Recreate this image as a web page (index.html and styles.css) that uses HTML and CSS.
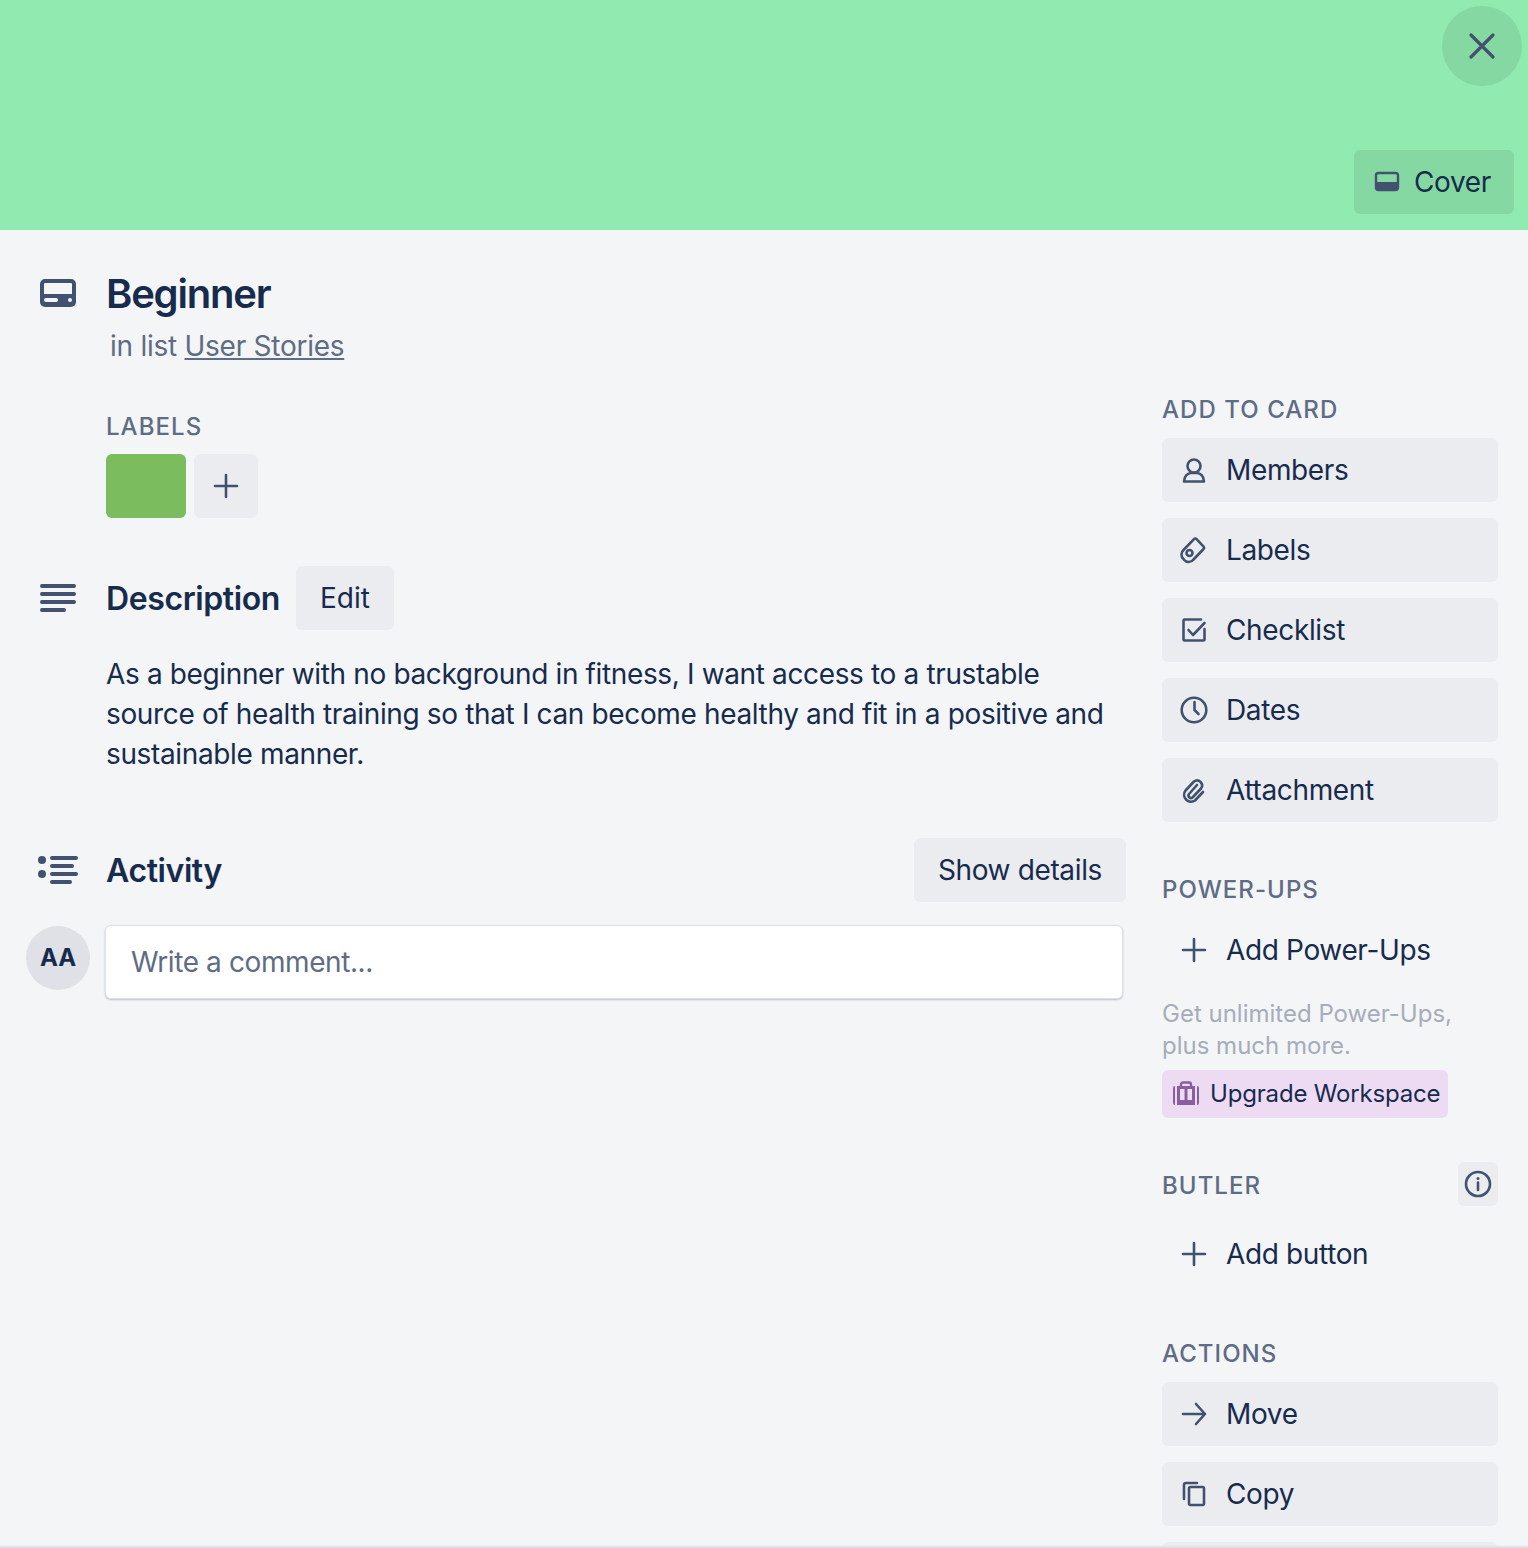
FILE: index.html
```html
<!DOCTYPE html>
<html>

<head>
    <link rel="stylesheet" href="styles.css">
</head>

<body>
    <div class="card">
        <div class="cover">
            <button class="close-btn">
                <svg width="32" height="32" viewBox="0 0 32 32"><path d="M5 5L27 27M27 5L5 27" class="ic bold"/></svg>
            </button>
            <button class="cover-btn">
                <svg width="28" height="24" viewBox="0 0 28 24"><rect x="3" y="3" width="22" height="17" rx="2.5" fill="none" stroke="#42526e" stroke-width="2.4"/><path d="M3 12H25V18A2 2 0 0 1 23 20H5A2 2 0 0 1 3 18Z" fill="#42526e"/></svg>
                Cover
            </button>
        </div>
        <div class="body">
            <div class="main">
                <div class="title-row">
                    <div class="gutter">
                        <svg width="36" height="28" viewBox="0 0 36 28"><path fill-rule="evenodd" d="M5 0H31A5 5 0 0 1 36 5V23A5 5 0 0 1 31 28H5A5 5 0 0 1 0 23V5A5 5 0 0 1 5 0ZM5 4A1 1 0 0 0 4 5V15H32V5A1 1 0 0 0 31 4ZM6 19A2 2 0 0 0 6 23H16A2 2 0 0 0 16 19ZM30 19A2 2 0 0 0 30 23A2 2 0 0 0 30 19Z" fill="#42526e"/></svg>
                    </div>
                    <div>
                        <h1>Beginner</h1>
                        <p class="in-list">in list <a href="#">User Stories</a></p>
                    </div>
                </div>

                <div class="labels-block">
                    <h4 class="caps">LABELS</h4>
                    <div class="chips">
                        <span class="chip-green"></span>
                        <button class="chip-add">
                            <svg width="28" height="28" viewBox="0 0 28 28"><path d="M14 3V25M3 14H25" class="ic"/></svg>
                        </button>
                    </div>
                </div>

                <div class="desc-head">
                    <div class="gutter">
                        <svg width="36" height="28" viewBox="0 0 36 28"><path d="M2 2H34M2 10H34M2 18H34M2 26H24" class="ic thick"/></svg>
                    </div>
                    <h3>Description</h3>
                    <button class="btn edit">Edit</button>
                </div>
                <p class="desc">As a beginner with no background in fitness, I want access to a trustable source of health training so that I can become healthy and fit in a positive and sustainable manner.</p>

                <div class="activity-head">
                    <div class="gutter">
                        <svg width="40" height="30" viewBox="0 0 40 30"><circle cx="4" cy="5" r="4" fill="#42526e"/><circle cx="4" cy="19" r="4" fill="#42526e"/><path d="M14 3H38M14 11H34M14 19H38M14 27H32" class="ic thick"/></svg>
                    </div>
                    <h3>Activity</h3>
                    <button class="btn push">Show details</button>
                </div>
                <div class="comment-row">
                    <div class="gutter"><span class="avatar">AA</span></div>
                    <div class="comment-box">Write a comment...</div>
                </div>
            </div>

            <div class="side">
                <h4 class="caps first">ADD TO CARD</h4>
                <div class="stack">
                    <button class="side-btn">
                        <svg width="28" height="28" viewBox="0 0 28 28"><circle cx="14" cy="10" r="6.500" class="ic"/><path d="M4 25.500C4 20 8 17 11 17H17C20 17 24 20 24 25.500Z" class="ic"/></svg>
                        Members
                    </button>
                    <button class="side-btn">
                        <svg width="28" height="28" viewBox="0 0 28 28"><path d="M14 3.200A1.800 1.800 0 0 1 16.600 3.200L23.600 10.600A1.800 1.800 0 0 1 23.600 13L13.500 23.500A6 6 0 0 1 4 23.700L3.500 23A6 6 0 0 1 3.500 14Z" class="ic"/><circle cx="9.500" cy="17" r="3" class="ic"/></svg>
                        Labels
                    </button>
                    <button class="side-btn">
                        <svg width="28" height="28" viewBox="0 0 28 28"><path d="M24.500 13V23.500A1 1 0 0 1 23.500 24.500H4.500A1 1 0 0 1 3.500 23.500V4.500A1 1 0 0 1 4.500 3.500H21M8.500 14L13 19L24.500 7" class="ic"/></svg>
                        Checklist
                    </button>
                    <button class="side-btn">
                        <svg width="28" height="28" viewBox="0 0 28 28"><circle cx="14" cy="14" r="12.300" class="ic"/><path d="M14.500 6V14L18.500 18" class="ic"/></svg>
                        Dates
                    </button>
                    <button class="side-btn">
                        <svg width="28" height="28" viewBox="0 0 28 28"><path d="M17 9L9 18A2.500 2.500 0 0 0 12.500 21.500L21 12.500A5 5 0 0 0 14 5.500L5.500 14.500A7 7 0 0 0 15 24.500L23 16" class="ic"/></svg>
                        Attachment
                    </button>
                </div>

                <h4 class="caps power">POWER-UPS</h4>
                <button class="side-btn plain">
                    <svg width="28" height="28" viewBox="0 0 28 28"><path d="M14 3V25M3 14H25" class="ic"/></svg>
                    Add Power-Ups
                </button>
                <p class="promo">Get unlimited Power-Ups,<br>plus much more.</p>
                <button class="upgrade">
                    <svg width="28" height="26" viewBox="0 0 28 26"><path d="M9 5V3.500A2 2 0 0 1 11 1.500H17A2 2 0 0 1 19 3.500V5" fill="none" stroke="#89609e" stroke-width="2.400"/><path fill-rule="evenodd" d="M5 5H23V24H5ZM8 8V19H12.500V8ZM15.500 8V19H20V8Z" fill="#89609e"/><path d="M1 7A2 2 0 0 1 3 5V24A2 2 0 0 1 1 22ZM27 7A2 2 0 0 0 25 5V24A2 2 0 0 0 27 22Z" fill="#89609e"/></svg>
                    Upgrade Workspace
                </button>

                <div class="butler-head">
                    <h4 class="caps">BUTLER</h4>
                    <button class="info-btn">
                        <svg width="28" height="28" viewBox="0 0 28 28"><circle cx="14" cy="14" r="12" class="ic"/><circle cx="14" cy="8.500" r="1.500" fill="#42526e"/><path d="M14 12.500V20" class="ic"/></svg>
                    </button>
                </div>
                <button class="side-btn plain">
                    <svg width="28" height="28" viewBox="0 0 28 28"><path d="M14 3V25M3 14H25" class="ic"/></svg>
                    Add button
                </button>

                <h4 class="caps actions">ACTIONS</h4>
                <div class="stack">
                    <button class="side-btn">
                        <svg width="28" height="28" viewBox="0 0 28 28"><path d="M3 14H25M16 4L25 14L16 24" class="ic"/></svg>
                        Move
                    </button>
                    <button class="side-btn">
                        <svg width="28" height="28" viewBox="0 0 28 28"><rect x="9" y="7" width="15" height="18" rx="1.500" class="ic"/><path d="M4 19V5A2 2 0 0 1 6 3H17" class="ic"/></svg>
                        Copy
                    </button>
                    <button class="side-btn"></button>
                </div>
            </div>
        </div>
        <div class="bottom-line"></div>
    </div>
</body>

</html>
```

FILE: styles.css
```css
* {
    box-sizing: border-box;
}

html, body {
    margin: 0;
    height: 100%;
}

body {
    font-family: Inter, 'Liberation Sans', sans-serif;
    font-size: 28px;
    line-height: 40px;
    letter-spacing: -0.36px;
    color: #172b4d;
    background: #f4f5f7;
    overflow: hidden;
}

button {
    font: inherit;
    letter-spacing: inherit;
    color: inherit;
    border: none;
    cursor: pointer;
}

svg {
    display: block;
    flex-shrink: 0;
}

.ic {
    fill: none;
    stroke: #42526e;
    stroke-width: 2.6;
    stroke-linecap: round;
    stroke-linejoin: round;
}

.ic.thick {
    stroke-width: 4;
}

.ic.bold {
    stroke-width: 3.2;
}

.card {
    position: relative;
    height: 1548px;
    overflow: hidden;
}

.cover {
    position: relative;
    height: 230px;
    background: #91eaaf;
}

.close-btn {
    position: absolute;
    top: 6px;
    right: 6px;
    width: 80px;
    height: 80px;
    border-radius: 50%;
    background: #85d8a1;
    display: flex;
    align-items: center;
    justify-content: center;
}

.cover-btn {
    position: absolute;
    top: 150px;
    right: 14px;
    width: 160px;
    height: 64px;
    border-radius: 6px;
    background: #85d8a1;
    display: flex;
    align-items: center;
    gap: 13px;
    padding-left: 19px;
}

.body {
    display: flex;
    padding-left: 26px;
}

.main {
    width: 1100px;
}

.gutter {
    width: 64px;
    margin-right: 16px;
    display: flex;
    justify-content: center;
    flex-shrink: 0;
}

.title-row {
    display: flex;
    padding-top: 40px;
}

.title-row .gutter {
    padding-top: 9px;
}

h1 {
    margin: 0;
    font-size: 40px;
    line-height: 48px;
    font-weight: 600;
    letter-spacing: -1.2px;
}

.in-list {
    margin: 8px 0 0 4px;
    color: #5e6c84;
    letter-spacing: -0.26px;
}

.in-list a {
    color: #5e6c84;
}

.caps {
    margin: 0;
    font-size: 24px;
    line-height: 32px;
    font-weight: 500;
    letter-spacing: 1.05px;
    color: #5e6c84;
}

.labels-block {
    margin: 45px 0 0 80px;
}

.chips {
    display: flex;
    gap: 8px;
    margin-top: 11px;
}

.chip-green {
    width: 80px;
    height: 64px;
    border-radius: 6px;
    background: #7bbc5e;
}

.chip-add {
    width: 64px;
    height: 64px;
    border-radius: 6px;
    background: #ebecf0;
    display: flex;
    align-items: center;
    justify-content: center;
    padding: 0;
}

.desc-head,
.activity-head {
    display: flex;
    align-items: center;
}

.desc-head {
    margin-top: 48px;
}

h3 {
    margin: 0;
    padding-top: 1px;
    font-size: 32px;
    line-height: 40px;
    font-weight: 600;
    letter-spacing: -0.4px;
}

.btn {
    height: 64px;
    padding: 0 24px;
    border-radius: 6px;
    background: #ebecf0;
    margin-left: 16px;
}

.btn.edit {
    width: 98px;
    padding: 0;
    letter-spacing: 0;
}

.btn.push {
    margin-left: auto;
}

.desc {
    margin: 24px 0 0 80px;
    width: 1010px;
}

.activity-head {
    margin-top: 64px;
}

.comment-row {
    display: flex;
    margin-top: 23px;
}

.comment-row .gutter {
    margin-right: 15px;
    padding-top: 1px;
}

.avatar {
    width: 64px;
    height: 64px;
    border-radius: 50%;
    background: #dfe1e6;
    font-size: 24px;
    font-weight: 700;
    letter-spacing: 0;
    display: flex;
    align-items: center;
    justify-content: center;
}

.comment-box {
    width: 1018px;
    height: 74px;
    padding: 0 25px;
    background: #fff;
    border: 1px solid #dfe1e6;
    border-radius: 6px;
    box-shadow: 0 1px 2px rgba(9, 30, 66, 0.25);
    color: #5e6c84;
    letter-spacing: -0.4px;
    display: flex;
    align-items: center;
}

.side {
    width: 336px;
    margin-left: 36px;
    padding-top: 164px;
}

.stack {
    display: flex;
    flex-direction: column;
    gap: 16px;
    margin-top: 12px;
}

.side-btn {
    width: 100%;
    height: 64px;
    padding: 0 0 0 18px;
    border-radius: 6px;
    background: #ebecf0;
    display: flex;
    align-items: center;
    gap: 18px;
    flex-shrink: 0;
}

.side-btn.plain {
    background: none;
}

.power {
    margin-top: 52px;
    margin-bottom: 12px;
}

.promo {
    margin: 16px 0 8px;
    font-size: 24px;
    line-height: 32px;
    letter-spacing: 0;
    color: #a5adba;
}

.upgrade {
    width: 286px;
    height: 48px;
    padding: 0 0 0 10px;
    border-radius: 6px;
    background: #eddbf4;
    font-size: 24px;
    letter-spacing: -0.18px;
    display: flex;
    align-items: center;
    gap: 10px;
    white-space: nowrap;
}

.butler-head {
    display: flex;
    align-items: center;
    justify-content: space-between;
    margin-top: 44px;
    margin-bottom: 16px;
}

.butler-head .caps {
    padding-top: 4px;
}

.info-btn {
    width: 40px;
    height: 44px;
    padding: 0;
    border-radius: 6px;
    background: #ebecf0;
    display: flex;
    align-items: center;
    justify-content: center;
}

.actions {
    margin-top: 52px;
}

.bottom-line {
    position: absolute;
    left: 0;
    right: 0;
    bottom: 0;
    height: 2px;
    background: #dfe1e6;
}
```
